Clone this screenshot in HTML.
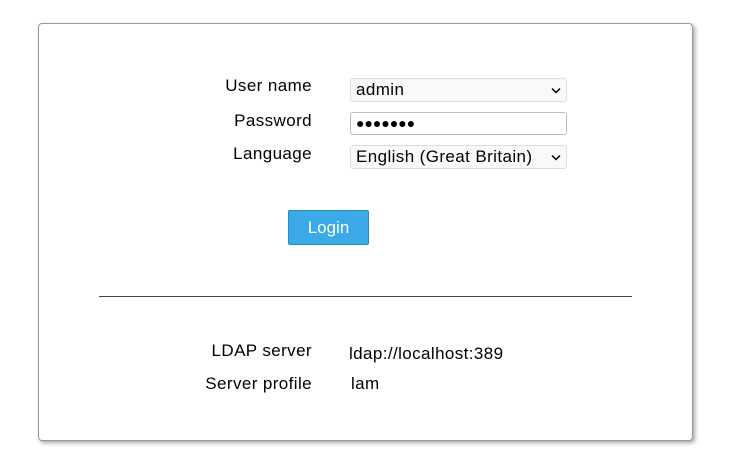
<!DOCTYPE html>
<html><head><style>
body{margin:0;background:#fff;font-family:"Liberation Sans",Arial,sans-serif;font-size:17px;letter-spacing:0.4px;color:#000;}
.box{position:absolute;left:38px;top:23px;width:653px;height:416px;border:1px solid #999;border-radius:4px;box-shadow:2px 2px 4px rgba(0,0,0,.35);background:#fff;}
.lbl{position:absolute;width:160px;left:152px;text-align:right;}
.fld{position:absolute;left:350px;width:217px;border:1px solid #ddd;border-radius:3px;background:#f9f9f9;box-sizing:border-box;}
.sel{height:24px;line-height:22px;padding-left:5px;}
.chev{position:absolute;right:5px;top:8px;}
.btn{position:absolute;left:288px;top:210px;width:81px;height:35px;box-sizing:border-box;background:#3aa9e6;border:1px solid #2a88c0;border-radius:2px;color:#fff;text-align:center;line-height:33px;font-size:17px;letter-spacing:0;}
.hr{position:absolute;left:99px;top:296px;width:533px;height:1px;background:#444;}
</style></head><body>
<div class="box"></div>
<div class="lbl" style="top:76px">User name</div>
<div class="lbl" style="top:111px">Password</div>
<div class="lbl" style="top:144px">Language</div>
<div class="fld sel" style="top:78px">admin<svg class="chev" width="10" height="7" viewBox="0 0 10 7"><path d="M1 1.5L5 5.5L9 1.5" stroke="#000" stroke-width="1.5" fill="none"/></svg></div>
<div class="fld" style="top:112px;height:23px;background:#fff;border-color:#bbb;padding-left:5px;line-height:21px;font-size:14px;letter-spacing:0px">●●●●●●●</div>
<div class="fld sel" style="top:145px">English (Great Britain)<svg class="chev" width="10" height="7" viewBox="0 0 10 7"><path d="M1 1.5L5 5.5L9 1.5" stroke="#000" stroke-width="1.5" fill="none"/></svg></div>
<div class="btn">Login</div>
<div class="hr"></div>
<div class="lbl" style="top:341px">LDAP server</div>
<div style="position:absolute;left:349px;top:344px">ldap://localhost:389</div>
<div class="lbl" style="top:374px">Server profile</div>
<div style="position:absolute;left:351px;top:374px">lam</div>
</body></html>
